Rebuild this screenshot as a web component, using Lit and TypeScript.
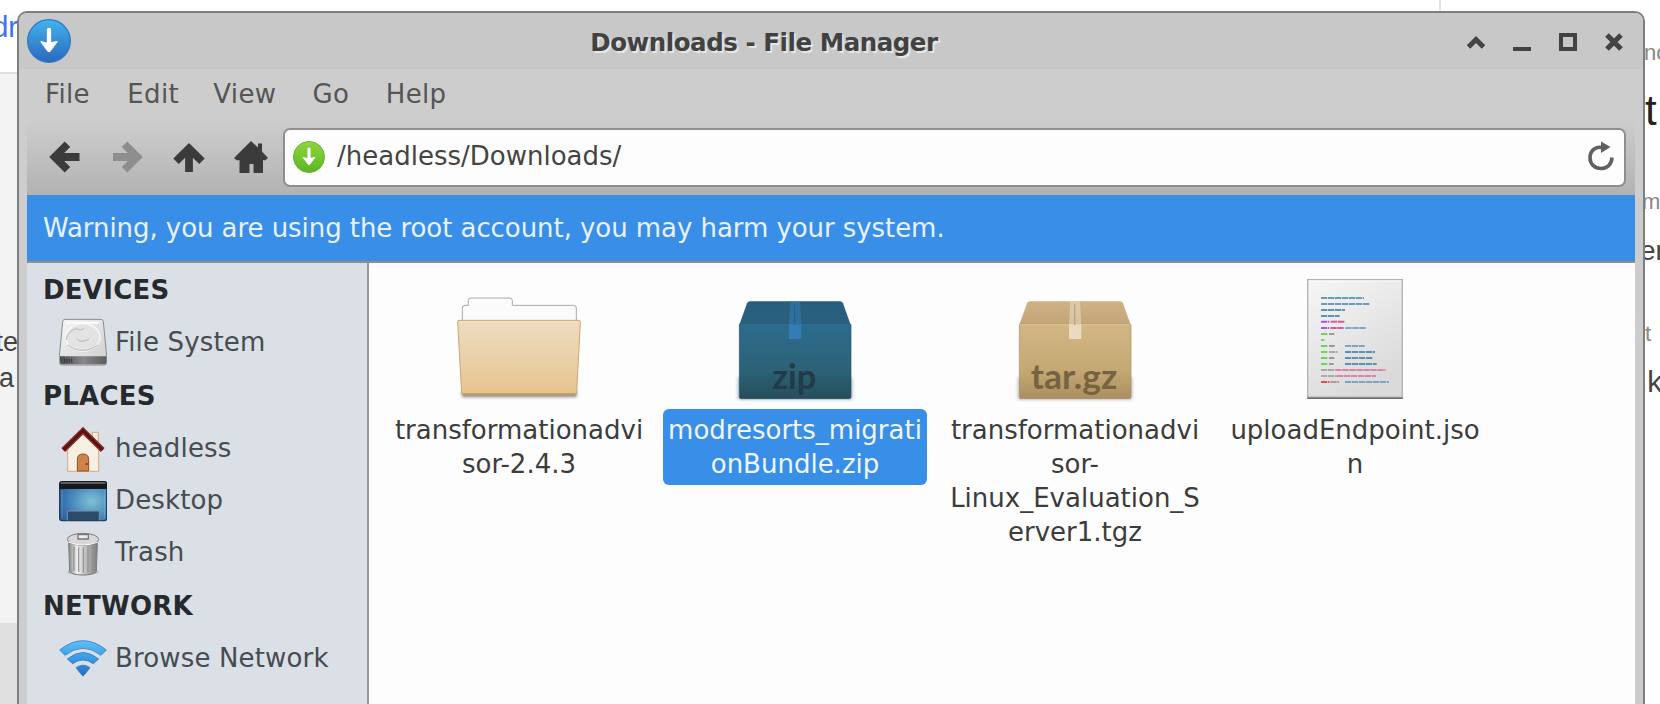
import { LitElement, html, svg, css } from "lit";
import { customElement, property } from "lit/decorators.js";
import { classMap } from "lit/directives/class-map.js";

/* ---------- sidebar icons ---------- */

const driveIcon = html`<svg viewBox="177 174 144 144">
  <defs>
    <linearGradient id="top" x1="0" y1="0" x2="1" y2="1"><stop offset="0" stop-color="#f6f6f6"/><stop offset="1" stop-color="#cfcfcf"/></linearGradient>
    <linearGradient id="front"><stop offset="0" stop-color="#4c4c4c"/><stop offset=".5" stop-color="#888"/><stop offset="1" stop-color="#5c5c5c"/></linearGradient>
  </defs>
  <path d="M195 178h108q6 0 7 7l10 104v18q0 8-8 8H186q-8 0-8-8v-18l10-104q1-7 7-7z" fill="url(#top)" stroke="#8b8b8b" stroke-width="3"/>
  <path d="M180 289h139v17q0 7-7 7H187q-7 0-7-7z" fill="url(#front)"/>
  <path d="M215 296v12M208 296v12M201 296v12M194 296v12" stroke="#333" stroke-width="3"/>
  <ellipse cx="249" cy="232" rx="51" ry="41" fill="#e3e3e3" stroke="#f8f8f8" stroke-width="4"/>
  <path d="M198 240q4-27 31-34l13 4 10-4M204 254q17 17 44 17t44-16M232 236q3 10 17 8t18-8" fill="none" stroke="#b6b6b6" stroke-width="3"/>
  <path d="M202 188h94" stroke="#fff" stroke-width="5"/>
</svg>`;

const homeIcon = html`<svg viewBox="177 490 144 144">
  <path d="M277 515h18v36h-18z" fill="#f5ebdd" stroke="#c9a57a" stroke-width="3"/>
  <path d="M203 564l46-44 47 44v68h-93z" fill="#f8efe3" stroke="#cfab80" stroke-width="3"/>
  <path d="M190 568l59-58 59 58" fill="none" stroke="#8d3a34" stroke-width="17"/>
  <path d="M190 568l59-58 59 58" fill="none" stroke="#5f1414" stroke-width="10"/>
  <path d="M232 631v-34q0-17 17-17t17 17v34z" fill="#cf8447" stroke="#8c4f22" stroke-width="3"/>
  <circle cx="260" cy="610" r="3" fill="#5c3517"/>
</svg>`;

const desktopIcon = html`<svg viewBox="177 18 144 144">
  <defs><radialGradient id="screen" cx=".68" cy=".5" r=".75"><stop offset="0" stop-color="#7fc0d6"/><stop offset=".55" stop-color="#4a8bbd"/><stop offset="1" stop-color="#2a5f9d"/></radialGradient></defs>
  <rect x="179" y="35" width="141" height="117" rx="7" fill="url(#screen)" stroke="#1d3f66" stroke-width="4"/>
  <path d="M178 57V42q0-8 8-8h127q8 0 8 8v15z" fill="#161a1f"/>
  <path d="M182 39h134" stroke="#77746c" stroke-width="5"/>
  <path d="M186 60v86M313 60v86" stroke="#8fc3e6" stroke-width="2" opacity=".6"/>
  <path d="M202 151v-28h96v28" fill="#2d4a68" stroke="#7393b0" stroke-width="3"/>
</svg>`;

const trashIcon = html`<svg viewBox="177 174 144 144">
  <defs><linearGradient id="can"><stop offset="0" stop-color="#858585"/><stop offset=".3" stop-color="#f1f1f1"/><stop offset=".6" stop-color="#bdbdbd"/><stop offset="1" stop-color="#7c7c7c"/></linearGradient></defs>
  <ellipse cx="249" cy="306" rx="47" ry="10" fill="#9da1a8" opacity=".6"/>
  <path d="M206 220h86l-3 84q-8 11-40 11t-40-11z" fill="url(#can)" stroke="#7b7b7b" stroke-width="3"/>
  <path d="M222 230v72M236 232v74M250 232v76M264 232v74M278 230v72" stroke="#8f8f8f" stroke-width="3.500"/>
  <ellipse cx="249" cy="208" rx="47" ry="18" fill="#d8d8d8" stroke="#7d7d7d" stroke-width="3"/>
  <path d="M207 217q42 16 84 0" fill="none" stroke="#fff" stroke-width="3"/>
  <path d="M234 207v-13h31v13z" fill="#eee" stroke="#777" stroke-width="4"/>
</svg>`;

const networkIcon = html`<svg viewBox="177 494 144 144">
  <defs><linearGradient id="wave" x1="0" y1="513" x2="0" y2="620" gradientUnits="userSpaceOnUse"><stop offset="0" stop-color="#5cc3f3"/><stop offset=".5" stop-color="#3a9be6"/><stop offset="1" stop-color="#2a6dc2"/></linearGradient></defs>
  <g fill="url(#wave)" stroke="#2f7cc4" stroke-width="2.5" stroke-linejoin="round">
    <path d="M179 542q70-56 140 0l-16 16q-54-42-108 0z"/>
    <path d="M202 569q47-39 94 0l-16 14q-31-22-62 0z"/>
    <path d="M228 595q21-15 42 0l-18 23q-3 4-6 0z"/>
  </g>
</svg>`;

/* ---------- file icons ---------- */

const folderIcon = html`<svg viewBox="225 48 390 384">
  <defs>
    <linearGradient id="fold" x1="0" y1="0" x2="0" y2="1"><stop offset="0" stop-color="#eddcc2"/><stop offset=".5" stop-color="#ead1a9"/><stop offset="1" stop-color="#e6c48b"/></linearGradient>
    <filter id="soft" x="-20%" y="-100%" width="140%" height="300%"><feGaussianBlur stdDeviation="5"/></filter>
  </defs>
  <rect x="248" y="392" width="346" height="20" rx="6" fill="#777" filter="url(#soft)" opacity=".8"/>
  <path d="M250 190v-46q0-8 8-8h10v-14q0-8 8-8h116q8 0 8 8v14h184q8 0 8 8v46z" fill="#fbfbfb" stroke="#a9a9a9" stroke-width="3"/>
  <path d="M240 181h359q6 0 5 7l-11 210q0 6-7 6H255q-7 0-7-6l-12-210q-1-7 4-7z" fill="url(#fold)" stroke="#c7a872" stroke-width="3"/>
  <path d="M241 185h357" stroke="#f3e4c6" stroke-width="3"/>
  <path d="M252 402h338" stroke="#b9975c" stroke-width="4"/>
</svg>`;

interface BoxLook {
  lid: [string, string];
  body: [string, string, string];
  edge: string;
  seam: string;
  tape: string;
  ink: string;
  shadow: string;
}

const boxIcon = (look: BoxLook, label: string, x: number, width: number) => html`<svg viewBox="240 48 390 384">
  <defs>
    <linearGradient id="lid" x1="0" y1="0" x2="0" y2="1"><stop offset="0" stop-color=${look.lid[0]}/><stop offset="1" stop-color=${look.lid[1]}/></linearGradient>
    <linearGradient id="body" x1="0" y1="0" x2="0" y2="1"><stop offset="0" stop-color=${look.body[0]}/><stop offset=".6" stop-color=${look.body[1]}/><stop offset="1" stop-color=${look.body[2]}/></linearGradient>
    <filter id="soft" x="-20%" y="-40%" width="140%" height="180%"><feGaussianBlur stdDeviation="5"/></filter>
  </defs>
  <rect x="262" y="350" width="346" height="70" rx="8" fill=${look.shadow} filter="url(#soft)" opacity=".6"/>
  <path d="M300 124h270q6 0 9 6l23 64H268l23-64q3-6 9-6z" fill="url(#lid)"/>
  <path d="M268 193h335v218q0 5-5 5H273q-5 0-5-5z" fill="url(#body)" stroke=${look.edge} stroke-width="2"/>
  <path d="M269 194h333" stroke=${look.seam} stroke-width="3"/>
  <path d="M421 124h29l4 71h-37z" fill=${look.tape} opacity=".5"/>
  <path d="M417 195h37v42h-37z" fill=${look.tape} opacity=".85"/>
  <path d="M434 132v62" stroke=${look.edge} stroke-width="4" opacity=".6"/>
  <text class="tag" x=${x} y="387" textLength=${width} lengthAdjust="spacingAndGlyphs" fill=${look.ink}>${label}</text>
</svg>`;

const zipIcon = boxIcon(
  { lid: ["#285f7e", "#29607e"], body: ["#2c6b8d", "#2c6277", "#264e5b"], edge: "#26586e", seam: "#2f6f98", tape: "#367fc0", ink: "#1f3c48", shadow: "#8fa3b4" },
  "zip", 367, 132);

const tarIcon = boxIcon(
  { lid: ["#cfb284", "#c2a478"], body: ["#d2b684", "#c5a975", "#ab8f60"], edge: "#ab8d5c", seam: "#dfc797", tape: "#eee1cb", ink: "#776341", shadow: "#a9a4b0" },
  "tar.gz", 302, 260);

/* Each row of code: y, then [start, end, colour] runs. */
const codeRows: [number, [number, number, string][]][] = [
  [114, [[333, 462, "#6a9dba"]]],
  [132, [[333, 480, "#6a9dba"]]],
  [150, [[333, 405, "#5f93b0"]]],
  [168, [[333, 389, "#5f93b0"]]],
  [185, [[333, 358, "#a657dc"], [362, 405, "#db5c92"]]],
  [204, [[333, 357, "#a657dc"], [361, 402, "#d45c9a"], [406, 469, "#7ba7bf"]]],
  [222, [[333, 354, "#6fd45c"], [357, 373, "#8ea58b"]]],
  [240, [[333, 343, "#92c68b"]]],
  [258, [[333, 354, "#6fd45c"], [357, 374, "#999"], [405, 464, "#7ba7bf"]]],
  [276, [[333, 354, "#6fd45c"], [357, 383, "#aaa"], [405, 495, "#5c93b4"]]],
  [294, [[333, 354, "#6fd45c"], [357, 373, "#999"], [405, 489, "#5c93b4"]]],
  [312, [[333, 354, "#6fd45c"], [357, 371, "#999"], [405, 500, "#5c93b4"]]],
  [330, [[333, 376, "#aaa"], [376, 527, "#d983a8"]]],
  [348, [[333, 380, "#aaa"], [380, 498, "#d983a8"]]],
  [366, [[333, 358, "#ee4848"], [361, 387, "#b09a9a"], [405, 537, "#7ba7bf"]]],
];

const codeIcon = html`<svg viewBox="240 48 390 384">
  <defs>
    <linearGradient id="sheet" x1="0" y1="0" x2=".5" y2="1"><stop offset="0" stop-color="#f6f6f6"/><stop offset="1" stop-color="#dadada"/></linearGradient>
    <filter id="soft" x="-20%" y="-100%" width="140%" height="300%"><feGaussianBlur stdDeviation="2"/></filter>
  </defs>
  <rect x="291" y="404" width="288" height="13" rx="3" fill="#666" filter="url(#soft)"/>
  <rect x="293" y="59" width="284" height="353" fill="url(#sheet)" stroke="#b3b3b3" stroke-width="4"/>
  <path d="M296 63h278" stroke="#fff" stroke-width="3"/>
  <path d="M292 412h286" stroke="#8b8b8b" stroke-width="3"/>
  ${codeRows.map(([y, runs]) => runs.map(([a, b, colour]) => svg`<path d="M${a} ${y}H${b}" stroke=${colour} stroke-width="6" stroke-dasharray="19 2"/>`))}
</svg>`;

/* ---------- bar icons ---------- */

const downArrowDisc = (id: string, light: string, dark: string, edge: string) => html`<svg viewBox="0 0 132 132">
  <defs><linearGradient id=${id} x1="0" y1="0" x2="0" y2="1"><stop offset="0" stop-color=${light}/><stop offset="1" stop-color=${dark}/></linearGradient></defs>
  <circle cx="66" cy="66" r="64" fill="url(#${id})" stroke=${edge} stroke-width="4"/>
  <path d="M66 33v42" stroke="#fff" stroke-width="13" stroke-linecap="round"/>
  <path d="M42 68q12 5 24 4t24-4L69 96q-3 3-6 0z" fill="#fff" stroke="#fff" stroke-width="4" stroke-linejoin="round"/>
</svg>`;

const arrowLeft = html`<svg viewBox="0 0 32 32"><path d="M30.500 16H7M18.500 3.200L5.700 16l12.800 12.800" fill="none" stroke="currentColor" stroke-width="7.800"/></svg>`;
const arrowRight = html`<svg viewBox="0 0 32 32"><path d="M2 16h23M13.500 3.200L26.300 16 13.500 28.800" fill="none" stroke="currentColor" stroke-width="7.800"/></svg>`;
const arrowUp = html`<svg viewBox="0 0 32 32"><path d="M16 31V9M3 20.200L16 7.400l13 12.800" fill="none" stroke="currentColor" stroke-width="7.800"/></svg>`;
const house = html`<svg viewBox="0 0 34 34"><path d="M17 1l7 6.500V3.500h4v8L34 18l-3 2.500-2-.500V33h-9.500V24h-4v9H5.500V20l-2.500.500-3-2.500z" fill="currentColor"/></svg>`;
const reload = html`<svg viewBox="0 0 26 30"><path d="M15.500 7C8 4.500 1.800 9.500 2 17c.2 6.500 5 10.500 11 10.500S23.500 23.500 24 16.500" fill="none" stroke="currentColor" stroke-width="3.600"/><path d="M13 .5l9.500 5.500L13 12z" fill="currentColor"/></svg>`;

@customElement("side-entry")
class SideEntry extends LitElement {
  @property({ attribute: false }) icon: unknown;
  @property() label = "";
  static styles = css`
    :host { display: flex; align-items: center; height: 52px; padding-left: 32px; color: #454c52; letter-spacing: .15px; }
    svg { display: block; width: 48px; height: 48px; margin: 0 8px 2px 0; }
    span { padding-bottom: 2px; }
  `;
  render() {
    return html`${this.icon}<span>${this.label}</span>`;
  }
}

@customElement("file-tile")
class FileTile extends LitElement {
  @property({ attribute: false }) icon: unknown;
  @property({ attribute: false }) lines: string[] = [];
  @property({ type: Boolean }) selected = false;
  static styles = css`
    :host { display: flex; flex-direction: column; align-items: center; flex: none; width: 280px; color: #3c3c3c; }
    :host(:first-child) { width: 272px; }
    svg { display: block; width: 130px; height: 128px; }
    .tag { font: 700 104px "Lato", sans-serif; letter-spacing: 0; }
    .name { box-sizing: border-box; width: 264px; margin-top: 5px; padding: 4px 0; border-radius: 6px; text-align: center; line-height: 34px; white-space: nowrap; }
    .name div { display: flex; justify-content: center; }
    .selected { background: #398ee7; color: #f0f6fd; }
  `;
  render() {
    return html`${this.icon}
      <div class=${classMap({ name: true, selected: this.selected })}>${this.lines.map((l) => html`<div>${l}</div>`)}</div>`;
  }
}

const files = [
  { icon: folderIcon, lines: ["transformationadvi", "sor-2.4.3"] },
  { icon: zipIcon, lines: ["modresorts_migrati", "onBundle.zip"], selected: true },
  { icon: tarIcon, lines: ["transformationadvi", "sor-", "Linux_Evaluation_S", "erver1.tgz"] },
  { icon: codeIcon, lines: ["uploadEndpoint.jso", "n"] },
];

const places = [
  { title: "DEVICES", items: [{ icon: driveIcon, label: "File System" }] },
  { title: "PLACES", items: [{ icon: homeIcon, label: "headless" }, { icon: desktopIcon, label: "Desktop" }, { icon: trashIcon, label: "Trash" }] },
  { title: "NETWORK", items: [{ icon: networkIcon, label: "Browse Network" }] },
];

@customElement("app-root")
class AppRoot extends LitElement {
  static styles = css`
    :host { display: block; position: relative; width: 1660px; height: 704px; overflow: hidden; background: #fff; font-family: "DejaVu Sans", sans-serif; font-size: 26px; white-space: nowrap; }
    * { box-sizing: border-box; }
    .page { display: flex; justify-content: space-between; height: 704px; font-family: "Liberation Sans", sans-serif; }
    .left { width: 18px; display: flex; flex-direction: column; overflow: hidden; background: #f3f3f3; color: #444; }
    .left > div { display: flex; justify-content: flex-end; flex: none; }
    .crumb { height: 74px; padding-top: 11px; border-bottom: 2px solid #dedede; background: #fff; color: #3d70f5; font-size: 29px; line-height: 32px; }
    .copy { height: 549px; flex-direction: column; justify-content: flex-start !important; align-items: flex-end; padding: 250px 0 0 0; font-size: 27px; line-height: 36px; }
    .copy span:last-child { padding-right: 4px; }
    .foot { flex: 1 !important; background: #e0e0e0; }
    .right { width: 221px; display: flex; flex-direction: column; padding-left: 204px; overflow: hidden; border-left: 2px solid #dce3ee; }
    .right span { flex: none; color: #888; font-size: 22px; line-height: 30px; }
    .right .n1 { margin: 38px 0 0 -1px; }
    .right .n2 { margin: 23px 0 0 0; color: #222; font-size: 42px; line-height: 40px; }
    .right .n3 { margin: 56px 0 0 -3px; }
    .right .n4 { margin: 17px 0 0 -5px; color: #444; font-size: 28px; line-height: 34px; }
    .right .n5 { margin-top: 51px; }
    .right .n6 { margin: 16px 0 0 -6px; color: #444; font-size: 30px; line-height: 34px; }

    .window { position: absolute; left: 17px; top: 11px; width: 1628px; height: 720px; display: flex; flex-direction: column; border: 2px solid #7e7e7e; border-radius: 10px 10px 0 0; background: #c9c9c9; overflow: hidden; }
    .title { height: 56px; display: flex; align-items: center; padding: 0 20px 0 8px; background: #c8c8c8; flex: none; }
    .title svg { display: block; }
    .disc { width: 44px; height: 44px; }
    .disc svg { width: 44px; height: 44px; }
    .title h1 { flex: 1; margin: 4px 0 0; padding-right: 10px; text-align: center; font-size: 24.5px; letter-spacing: -.45px; line-height: 30px; font-weight: 700; color: #424242; text-shadow: 2px 2px 1px #e8e8e8; }
    .controls { display: flex; gap: 28px; padding-top: 2px; color: #434343; }
    .controls svg { width: 18px; height: 18px; }
    .frame { flex: 1; display: flex; flex-direction: column; margin: 0; padding: 0 8px; background: #cdcdcd; }
    .menu { height: 52px; display: grid; grid-template-columns: 82.3px 86px 99.3px 73.2px auto; align-items: center; padding: 0 0 2px 18px; letter-spacing: .35px; color: #555; flex: none; }
    .tools { height: 74px; display: flex; align-items: center; padding: 0 9px 2px 22px; background: linear-gradient(#cdcdcd, #b2b2b2); color: #3b3b3b; flex: none; }
    .tools > svg { display: block; width: 32px; height: 32px; margin-right: 30px; }
    .tools .off { display: block; color: #8e8e8e; margin-right: 30px; height: 32px; }
    .off svg { width: 32px; height: 32px; }
    .home { margin: 0 15px 0 -1px; height: 34px; }
    .home svg { width: 34px; height: 34px; }
    .entry { flex: 1; height: 59px; display: flex; align-items: center; border: 2px solid #8f8f8f; border-radius: 7px; background: #fdfdfd; color: #444; padding: 0 10px 0 8px; }
    .green { width: 32px; height: 32px; margin-right: 12px; }
    .green svg { width: 32px; height: 32px; display: block; }
    .path { flex: 1; margin-top: -2px; }
    .entry > svg { width: 26px; height: 30px; margin-top: -2px; color: #606060; }
    .warn { height: 68px; padding: 0 0 0 16px; display: flex; align-items: center; background: #398ee7; border-bottom: 2px solid #908e8b; color: #e9f2fc; letter-spacing: -.065px; flex: none; }
    .body { flex: 1; display: flex; }
    .side { width: 342px; background: #dbdfe6; border-right: 2px solid #979797; }
    .side h2 { margin: 0; height: 54px; padding-left: 16px; display: flex; align-items: center; font-size: 26px; letter-spacing: .25px; font-weight: 700; color: #262a2d; }
    .files { flex: 1; display: flex; align-items: flex-start; background: #fdfdfd; padding: 13px 0 0 14px; }
  `;
  render() {
    return html`
      <div class="page">
        <div class="left">
          <div class="crumb">dr</div>
          <div class="copy"><span>te</span><span>a</span></div>
          <div class="foot"></div>
        </div>
        <div class="right">
          <span class="n1">nc</span><span class="n2">t</span><span class="n3">m</span>
          <span class="n4">er</span><span class="n5">t</span><span class="n6">.k</span>
        </div>
      </div>
      <div class="window">
        <div class="title">
          <div class="disc">${downArrowDisc("blue", "#42b4ee", "#2b67bd", "#2f7cc2")}</div>
          <h1>Downloads - File Manager</h1>
          <div class="controls">
            <svg viewBox="0 0 18 18"><path d="M1.500 14L9 6.500l7.500 7.500" fill="none" stroke="currentColor" stroke-width="5"/></svg>
            <svg viewBox="0 0 18 18"><path d="M0 16h18" stroke="currentColor" stroke-width="4"/></svg>
            <svg viewBox="0 0 18 18"><path d="M2 2h14v14H2z" fill="none" stroke="currentColor" stroke-width="4"/></svg>
            <svg viewBox="0 0 18 18"><path d="M2 2l14 14M16 2L2 16" stroke="currentColor" stroke-width="5.200"/></svg>
          </div>
        </div>
        <div class="frame">
          <div class="menu">${["File", "Edit", "View", "Go", "Help"].map((m) => html`<span>${m}</span>`)}</div>
          <div class="tools">
            ${arrowLeft}<span class="off">${arrowRight}</span>${arrowUp}<span class="home">${house}</span>
            <div class="entry">
              <div class="green">${downArrowDisc("green", "#8fd63c", "#5cb526", "#68b32c")}</div>
              <span class="path">/headless/Downloads/</span>${reload}
            </div>
          </div>
          <div class="warn"><span>Warning, you are using the root account, you may harm your system.</span></div>
          <div class="body">
            <div class="side">
              ${places.map((g) => html`<h2>${g.title}</h2>${g.items.map((i) => html`<side-entry .icon=${i.icon} .label=${i.label}></side-entry>`)}`)}
            </div>
            <div class="files">
              ${files.map((f) => html`<file-tile .icon=${f.icon} .lines=${f.lines} ?selected=${!!f.selected}></file-tile>`)}
            </div>
          </div>
        </div>
      </div>`;
  }
}
